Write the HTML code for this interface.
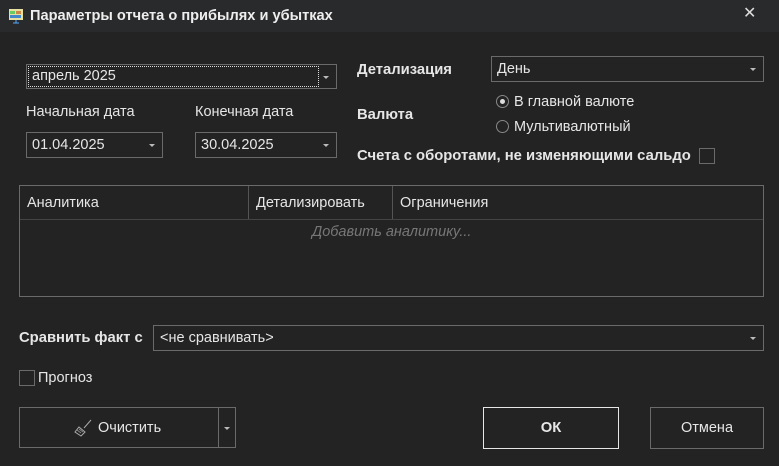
<!DOCTYPE html><html><head><meta charset="utf-8"><style>
body{margin:0;width:779px;height:466px;background:#232323;font-family:"Segoe UI","Liberation Sans",sans-serif;font-size:14.5px;color:#e6e6e6;position:relative;overflow:hidden}
.a{position:absolute}
.box{position:absolute;border:1px solid #6a6a6a;box-sizing:border-box}
.arr{position:absolute;right:7px;top:50%;margin-top:-1px;border-left:3px solid transparent;border-right:3px solid transparent;border-top:3px solid #bbb}
.b{font-weight:bold;font-size:14.8px}
.t{position:absolute;line-height:16px;white-space:nowrap}
</style></head><body>
<div class="a" style="left:0;top:0;width:779px;height:32px;background:#292a2c"></div>
<svg class="a" style="left:8px;top:8px" width="16" height="16"><rect x="1" y="1" width="14" height="11" fill="#e8e0a0"/><rect x="2" y="3" width="5" height="3" fill="#6c6"/><rect x="8" y="3" width="5" height="3" fill="#c84"/><rect x="2" y="7" width="11" height="3" fill="#48c"/><path d="M8 12v3M5 15h6" stroke="#5af"/></svg>
<div class="t b" style="left:30px;top:8px;font-size:14.6px;color:#eee">Параметры отчета о прибылях и убытках</div>
<div class="t" style="left:743px;top:6px;font-size:16px;color:#ddd">✕</div>

<div class="box" style="left:26px;top:64px;width:311px;height:25px"><div class="a" style="left:1px;top:1px;width:291px;height:21px;border:1px dotted #ddd;box-sizing:border-box"></div><div class="t" style="left:5px;top:3px">апрель 2025</div><div class="arr"></div></div>
<div class="t" style="left:26px;top:104px">Начальная дата</div>
<div class="t" style="left:195px;top:104px">Конечная дата</div>
<div class="box" style="left:26px;top:132px;width:137px;height:26px"><div class="t" style="left:5px;top:4px">01.04.2025</div><div class="arr"></div></div>
<div class="box" style="left:195px;top:132px;width:142px;height:26px"><div class="t" style="left:5px;top:4px">30.04.2025</div><div class="arr"></div></div>

<div class="t b" style="left:357px;top:62px">Детализация</div>
<div class="box" style="left:491px;top:56px;width:273px;height:26px"><div class="t" style="left:5px;top:4px">День</div><div class="arr"></div></div>
<div class="t b" style="left:357px;top:107px">Валюта</div>
<div class="a" style="left:496px;top:95px;width:13px;height:13px;border:1px solid #888;border-radius:50%;box-sizing:border-box"><div class="a" style="left:3px;top:3px;width:5px;height:5px;border-radius:50%;background:#ddd"></div></div>
<div class="t" style="left:514px;top:94px">В главной валюте</div>
<div class="a" style="left:496px;top:120px;width:13px;height:13px;border:1px solid #888;border-radius:50%;box-sizing:border-box"></div>
<div class="t" style="left:514px;top:119px">Мультивалютный</div>
<div class="t b" style="left:357px;top:148px">Счета с оборотами, не изменяющими сальдо</div>
<div class="box" style="left:699px;top:148px;width:16px;height:16px"></div>

<div class="box" style="left:19px;top:185px;width:745px;height:112px"></div>
<div class="a" style="left:20px;top:219px;width:743px;height:1px;background:#444"></div>
<div class="a" style="left:248px;top:186px;width:1px;height:33px;background:#555"></div>
<div class="a" style="left:392px;top:186px;width:1px;height:33px;background:#555"></div>
<div class="t" style="left:27px;top:195px">Аналитика</div>
<div class="t" style="left:256px;top:195px">Детализировать</div>
<div class="t" style="left:400px;top:195px">Ограничения</div>
<div class="t" style="left:312px;top:224px;font-style:italic;color:#777">Добавить аналитику...</div>

<div class="t b" style="left:19px;top:330px">Сравнить факт с</div>
<div class="box" style="left:153px;top:325px;width:611px;height:26px"><div class="t" style="left:6px;top:4px">&lt;не сравнивать&gt;</div><div class="arr"></div></div>
<div class="box" style="left:19px;top:370px;width:16px;height:16px"></div>
<div class="t" style="left:38px;top:370px">Прогноз</div>

<div class="box" style="left:19px;top:407px;width:217px;height:41px"><div class="a" style="left:198px;top:0;width:1px;height:39px;background:#6a6a6a"></div><div class="arr" style="right:5px"></div>
<svg class="a" style="left:54px;top:10px" width="20" height="20"><path d="M17 2L10 10M5 9l6 5-4 4-6-4z" stroke="#aaa" fill="none"/><path d="M3 12l4 3M5 11l4 3" stroke="#888"/></svg>
<div class="t" style="left:78px;top:12px">Очистить</div></div>
<div class="box" style="left:483px;top:407px;width:136px;height:42px;border-color:#e6e6e6"><div class="t b" style="left:0;width:134px;text-align:center;top:12px">ОК</div></div>
<div class="box" style="left:650px;top:407px;width:114px;height:42px"><div class="t" style="left:0;width:112px;text-align:center;top:12px">Отмена</div></div>
</body></html>
